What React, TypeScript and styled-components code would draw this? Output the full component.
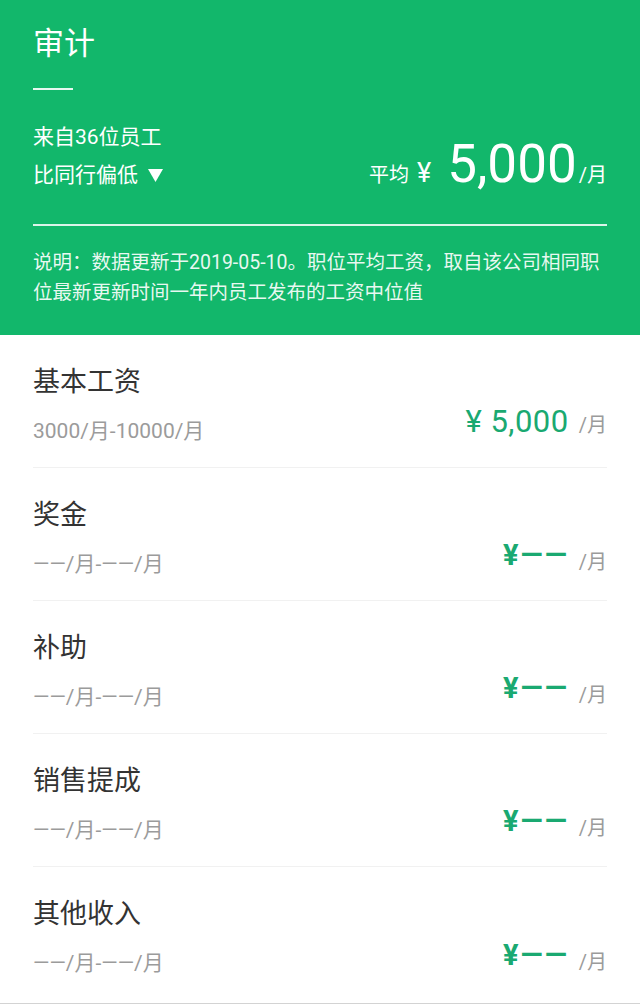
import React from 'react';
import styled, { createGlobalStyle } from 'styled-components';

const GlobalStyle = createGlobalStyle`
  html, body {
    margin: 0;
    padding: 0;
    background: #fff;
  }
  body {
    font-family: Roboto, "Noto Sans CJK SC", sans-serif;
    -webkit-font-smoothing: antialiased;
  }
`;

const GREEN = '#12b76b';
const PRICE_GREEN = '#1aa971';

type Item = {
  name: string;
  range: string;
  price: string;
  filled?: boolean;
};

const items: Item[] = [
  { name: '基本工资', range: '3000/月-10000/月', price: '¥ 5,000', filled: true },
  { name: '奖金', range: '——/月-——/月', price: '¥——' },
  { name: '补助', range: '——/月-——/月', price: '¥——' },
  { name: '销售提成', range: '——/月-——/月', price: '¥——' },
  { name: '其他收入', range: '——/月-——/月', price: '¥——' }
];

const Page = styled.div`
  width: 640px;
  min-height: 1004px;
  background: #fff;
  display: flex;
  flex-direction: column;
`;

const Header = styled.div`
  background: ${GREEN};
  height: 335px;
  padding: 0 33px;
  box-sizing: border-box;
  color: #fff;
  display: flex;
  flex-direction: column;
`;

const Title = styled.div`
  margin-top: 24px;
  font-size: 31px;
  line-height: 40px;
`;

const ShortLine = styled.div`
  margin-top: 24px;
  width: 40px;
  height: 2px;
  background: rgba(255, 255, 255, 0.9);
`;

const InfoRow = styled.div`
  margin-top: 28px;
  display: flex;
  justify-content: space-between;
  align-items: flex-end;
`;

const InfoLeft = styled.div`
  display: flex;
  flex-direction: column;
  font-size: 21px;
  line-height: 38px;
`;

const Compare = styled.div`
  display: flex;
  align-items: center;
  gap: 10px;
`;

const Average = styled.div`
  display: flex;
  align-items: baseline;
`;

const AvgLabel = styled.span`
  font-size: 20px;
  line-height: 30px;
`;

const AvgYen = styled.span`
  font-size: 27px;
  line-height: 30px;
  margin-left: 8px;
`;

const AvgAmount = styled.span`
  font-size: 53px;
  line-height: 60px;
  margin-left: 16px;
`;

const AvgUnit = styled.span`
  font-size: 20px;
  line-height: 30px;
  margin-left: 2px;
`;

const LongLine = styled.div`
  margin-top: 30px;
  height: 2px;
  background: rgba(255, 255, 255, 0.85);
`;

const Note = styled.div`
  margin-top: 22px;
  font-size: 19.5px;
  line-height: 30px;
  color: rgba(255, 255, 255, 0.92);
  white-space: nowrap;
`;

const List = styled.div`
  padding: 0 33px;
  display: flex;
  flex-direction: column;
`;

const Row = styled.div<{ $last?: boolean }>`
  height: ${p => (p.$last ? 134 : 133)}px;
  box-sizing: border-box;
  padding: 29px 0 21px;
  border-bottom: 1px solid ${p => (p.$last ? 'transparent' : '#f1f1f1')};
  display: flex;
  justify-content: space-between;
`;

const RowLeft = styled.div`
  display: flex;
  flex-direction: column;
`;

const RowName = styled.div`
  font-size: 27px;
  line-height: 36px;
  color: #333;
`;

const RowRange = styled.div`
  margin-top: 16px;
  font-size: 21px;
  line-height: 30px;
  color: #9b9b9b;
`;

const Price = styled.div`
  align-self: flex-end;
  margin-bottom: 4px;
  display: flex;
  align-items: baseline;
`;

const PriceValue = styled.span<{ $filled?: boolean }>`
  font-size: ${p => (p.$filled ? 31 : 29)}px;
  line-height: 40px;
  font-weight: ${p => (p.$filled ? 400 : 700)};
  color: ${PRICE_GREEN};
  letter-spacing: ${p => (p.$filled ? 0.5 : 2)}px;
`;

const PriceUnit = styled.span<{ $filled?: boolean }>`
  font-size: 20px;
  line-height: 30px;
  color: #9b9b9b;
  margin-left: 10px;
  position: relative;
  top: ${p => (p.$filled ? 0 : 4)}px;
`;

const BottomEdge = styled.div`
  margin-top: 2px;
  height: 2px;
  background: #d3d3d3;
`;

const Arrow = () => (
  <svg width="15" height="13" viewBox="0 0 15 13">
    <polygon points="0,0 15,0 7.5,13" fill="#fff" />
  </svg>
);

export default function App() {
  return (
    <Page>
      <GlobalStyle />
      <Header>
        <Title>审计</Title>
        <ShortLine />
        <InfoRow>
          <InfoLeft>
            <div>来自36位员工</div>
            <Compare>
              比同行偏低
              <Arrow />
            </Compare>
          </InfoLeft>
          <Average>
            <AvgLabel>平均</AvgLabel>
            <AvgYen>¥</AvgYen>
            <AvgAmount>5,000</AvgAmount>
            <AvgUnit>/月</AvgUnit>
          </Average>
        </InfoRow>
        <LongLine />
        <Note>
          说明：数据更新于2019-05-10。职位平均工资，取自该公司相同职
          <br />
          位最新更新时间一年内员工发布的工资中位值
        </Note>
      </Header>
      <List>
        {items.map((item, i) => (
          <Row key={item.name} $last={i === items.length - 1}>
            <RowLeft>
              <RowName>{item.name}</RowName>
              <RowRange>{item.range}</RowRange>
            </RowLeft>
            <Price>
              <PriceValue $filled={item.filled}>{item.price}</PriceValue>
              <PriceUnit $filled={item.filled}>/月</PriceUnit>
            </Price>
          </Row>
        ))}
      </List>
      <BottomEdge />
    </Page>
  );
}
